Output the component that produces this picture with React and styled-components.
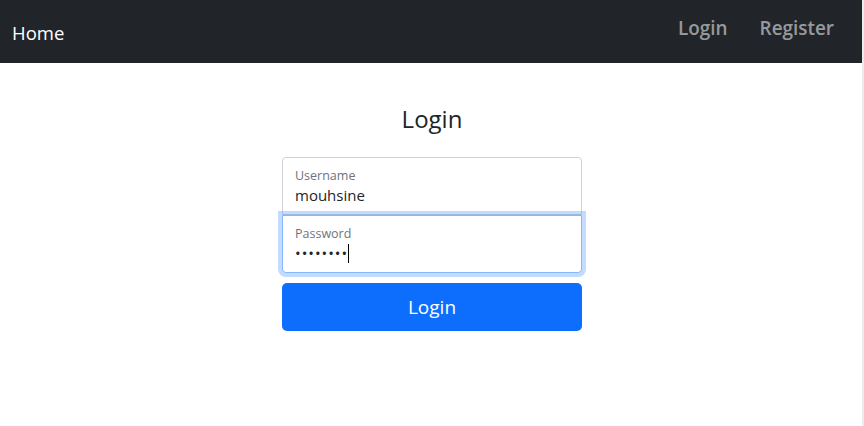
import React from "react";
import styled, { createGlobalStyle } from "styled-components";

const Global = createGlobalStyle`
  html, body { margin: 0; padding: 0; background: #fff; }
  body { font-family: "Open Sans", "Noto Sans", sans-serif; color: #212529; }
  * { box-sizing: border-box; }
`;

const Page = styled.div`
  position: relative;
  width: 864px;
  height: 426px;
  display: flex;
  flex-direction: column;
`;

const Edge = styled.div`
  position: absolute;
  top: 0;
  right: 0;
  width: 2px;
  height: 100%;
  background: #ececec;
`;

const Navbar = styled.nav`
  height: 63px;
  background: #212529;
  display: flex;
  align-items: center;
  justify-content: space-between;
  padding: 0 30px 0 12px;
`;

const Brand = styled.a`
  color: #fff;
  font-size: 18.5px;
  text-decoration: none;
  margin-top: 2px;
`;

const NavLinks = styled.div`
  display: flex;
  gap: 32px;
  margin-top: -7px;
`;

const NavLink = styled.a`
  color: rgba(255, 255, 255, 0.55);
  font-size: 18.9px;
  font-weight: 600;
  text-decoration: none;
`;

const Content = styled.div`
  display: flex;
  flex-direction: column;
  align-items: center;
  padding-top: 38px;
`;

const Title = styled.h3`
  margin: 0 0 20px;
  font-size: 24px;
  font-weight: 400;
  line-height: 36px;
`;

const Form = styled.form`
  width: 300px;
  display: flex;
  flex-direction: column;
`;

const Floating = styled.div`
  position: relative;
  height: 58px;
  border: 1px solid ${(p) => (p.$focus ? "#86b7fe" : "#ced4da")};
  border-radius: ${(p) => (p.$first ? "4px 4px 0 0" : "0 0 4px 4px")};
  box-shadow: ${(p) => (p.$focus ? "0 0 0 4px rgba(13,110,253,.25)" : "none")};
  background: #fff;
  padding: 9px 12px 0;
  display: flex;
  flex-direction: column;
  z-index: ${(p) => (p.$focus ? 1 : 0)};
`;

const Label = styled.span`
  font-size: 12.5px;
  color: #6c757d;
  line-height: 17px;
`;

const Value = styled.span`
  font-size: 15px;
  color: #212529;
  line-height: 22px;
  display: flex;
  align-items: center;
`;

const Dots = styled.span`
  letter-spacing: 1px;
  font-size: 15px;
`;

const Caret = styled.span`
  display: inline-block;
  width: 1px;
  height: 19px;
  background: #000;
`;

const Button = styled.button`
  margin-top: 10px;
  height: 48px;
  border: none;
  border-radius: 5px;
  background: #0d6efd;
  color: #fff;
  font-family: inherit;
  font-size: 19px;
`;

export default function App() {
  return (
    <Page>
      <Global />
      <Navbar>
        <Brand href="#">Home</Brand>
        <NavLinks>
          <NavLink href="#">Login</NavLink>
          <NavLink href="#">Register</NavLink>
        </NavLinks>
      </Navbar>
      <Content>
        <Title>Login</Title>
        <Form onSubmit={(e) => e.preventDefault()}>
          <Floating $first>
            <Label>Username</Label>
            <Value>mouhsine</Value>
          </Floating>
          <Floating $focus>
            <Label>Password</Label>
            <Value>
              <Dots>••••••••</Dots>
              <Caret />
            </Value>
          </Floating>
          <Button type="submit">Login</Button>
        </Form>
      </Content>
      <Edge />
    </Page>
  );
}
